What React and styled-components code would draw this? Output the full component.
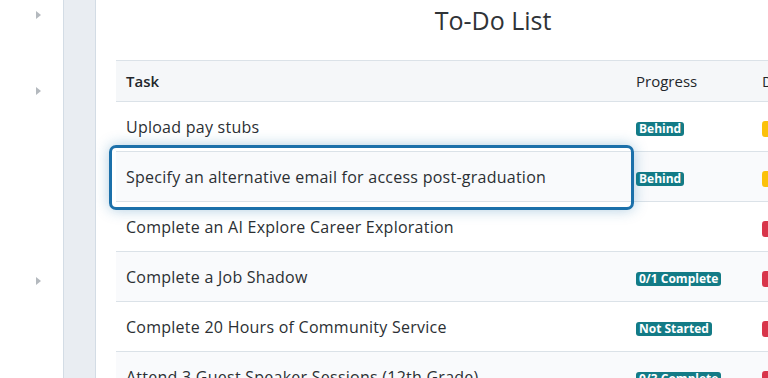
import React from "react";
import styled, { createGlobalStyle } from "styled-components";

const GlobalStyle = createGlobalStyle`
  html, body {
    margin: 0;
    padding: 0;
    background: #fff;
    overflow: hidden;
  }
  body {
    font-family: "Open Sans", "Liberation Sans", sans-serif;
    color: #2b2f33;
  }
`;

const tasks = [
  { name: "Upload pay stubs", progress: "Behind", due: "warn" },
  { name: "Specify an alternative email for access post-graduation", progress: "Behind", due: "warn" },
  { name: "Complete an AI Explore Career Exploration", progress: null, due: "late" },
  { name: "Complete a Job Shadow", progress: "0/1 Complete", due: "late" },
  { name: "Complete 20 Hours of Community Service", progress: "Not Started", due: "late" },
  { name: "Attend 3 Guest Speaker Sessions (12th Grade)", progress: "0/3 Complete", due: "late" },
];

function App() {
  return (
    <>
      <GlobalStyle />
      <Layout>
        <Sidebar>
          <Caret $top={11} />
          <Caret $top={68} />
          <Caret $top={182} />
        </Sidebar>
        <Rail />
        <Main>
          <Inner>
            <Title>To-Do List</Title>
            <TableWrap>
              <Table>
                <colgroup>
                  <col style={{ width: 510 }} />
                  <col style={{ width: 126 }} />
                  <col />
                </colgroup>
                <thead>
                  <tr>
                    <Th>Task</Th>
                    <Th $medium>Progress</Th>
                    <Th $medium>Due Date</Th>
                  </tr>
                </thead>
                <tbody>
                  {tasks.map((t, i) => (
                    <Row key={t.name} $alt={i % 2 === 1}>
                      <Td>{t.name}</Td>
                      <Td>{t.progress && <Badge>{t.progress}</Badge>}</Td>
                      <Td>
                        <DueBadge $kind={t.due}>{t.due === "warn" ? "Due Soon" : "Overdue"}</DueBadge>
                      </Td>
                    </Row>
                  ))}
                </tbody>
              </Table>
              <Spotlight />
            </TableWrap>
          </Inner>
        </Main>
      </Layout>
    </>
  );
}

const Layout = styled.div`
  display: flex;
  height: 378px;
  overflow: hidden;
`;

const Sidebar = styled.div`
  width: 64px;
  flex-shrink: 0;
  border-right: 1px solid #d3dce5;
  display: flex;
  flex-direction: column;
  padding-left: 36px;
  box-sizing: border-box;
`;

const Caret = styled.div`
  margin-top: ${(p) => p.$top}px;
  width: 0;
  height: 0;
  border-top: 4px solid transparent;
  border-bottom: 4px solid transparent;
  border-left: 5px solid #b4b9be;
`;

const Rail = styled.div`
  width: 31px;
  flex-shrink: 0;
  background: #e9edf2;
  border-right: 1px solid #d3dce5;
`;

const Main = styled.div`
  flex: 1;
  overflow: hidden;
  background: #fff;
`;

const Inner = styled.div`
  width: 794px;
  padding: 0 20px;
  box-sizing: border-box;
`;

const Title = styled.h1`
  margin: 0;
  padding-top: 3px;
  height: 60px;
  box-sizing: border-box;
  text-align: center;
  font-size: 25px;
  font-weight: 400;
  color: #2f3337;
`;

const TableWrap = styled.div`
  position: relative;
`;

const Table = styled.table`
  width: 100%;
  border-collapse: collapse;
  table-layout: fixed;
`;

const Th = styled.th`
  height: 41px;
  padding: 0 10px;
  text-align: left;
  white-space: nowrap;
  overflow: hidden;
  background: #f5f7f9;
  border-top: 1px solid #dbe2e8;
  border-bottom: 1px solid #dbe2e8;
  font-size: 15px;
  font-weight: ${(p) => (p.$medium ? 500 : 600)};
  color: #23272b;
  box-sizing: border-box;
`;

const Row = styled.tr`
  background: ${(p) => (p.$alt ? "#f9fafc" : "#fff")};
`;

const Td = styled.td`
  height: 50px;
  padding: 0 10px;
  border-bottom: 1px solid #dbe2e8;
  font-size: 16px;
  letter-spacing: 0.25px;
  color: #2b2f33;
  white-space: nowrap;
  overflow: hidden;
  box-sizing: border-box;
`;

const Badge = styled.span`
  display: inline-block;
  background: #137b86;
  color: #fff;
  font-size: 12px;
  font-weight: 700;
  letter-spacing: 0;
  line-height: 14px;
  padding: 0 3px;
  border-radius: 3px;
`;

const DueBadge = styled(Badge)`
  padding: 1px 8px;
  background: ${(p) => (p.$kind === "warn" ? "#fbc10a" : "#d8354a")};
`;

const Spotlight = styled.div`
  position: absolute;
  left: -7px;
  top: 85px;
  width: 525px;
  height: 65px;
  box-sizing: border-box;
  border: 3px solid #1b70aa;
  border-radius: 7px;
  box-shadow: 0 0 14px rgba(27, 112, 170, 0.35);
  pointer-events: none;
`;

export default App;
